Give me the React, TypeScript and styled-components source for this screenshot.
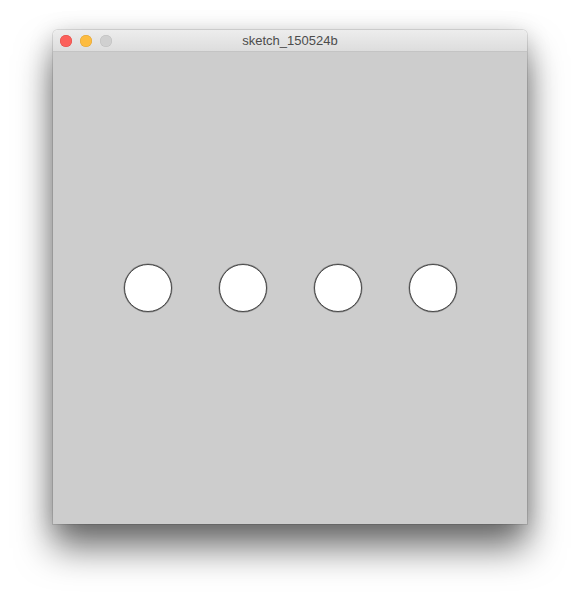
import styled, { createGlobalStyle } from "styled-components";

const GlobalStyle = createGlobalStyle`
  html, body {
    margin: 0;
    padding: 0;
    background: #ffffff;
  }
  body {
    width: 580px;
    height: 600px;
    overflow: hidden;
  }
`;

const Page = styled.div`
  padding: 30px 0 0 53px;
`;

const Window = styled.div`
  width: 474px;
  display: flex;
  flex-direction: column;
  border-radius: 5px 5px 0 0;
  box-shadow: 0 24px 36px rgba(0, 0, 0, 0.55), 0 4px 24px rgba(0, 0, 0, 0.18),
    0 0 0 1px rgba(0, 0, 0, 0.1);
  overflow: hidden;
`;

const TitleBar = styled.div`
  position: relative;
  height: 21px;
  display: flex;
  align-items: center;
  justify-content: center;
  background: linear-gradient(#ededed, #dddddd);
  border-bottom: 1px solid #c4c4c4;
`;

const Lights = styled.div`
  position: absolute;
  left: 7px;
  top: 5px;
  display: flex;
  gap: 8px;
`;

const Light = styled.span<{ $color: string; $ring: string }>`
  width: 12px;
  height: 12px;
  border-radius: 50%;
  background: ${(p) => p.$color};
  box-shadow: inset 0 0 0 0.5px ${(p) => p.$ring};
`;

const Title = styled.span`
  font-family: "Liberation Sans", Arial, sans-serif;
  font-size: 13px;
  color: #4c4c4c;
`;

const Canvas = styled.div`
  height: 472px;
  background: #cdcdcd;
  display: flex;
  align-items: center;
  justify-content: center;
  gap: 47px;
`;

const Dot = styled.div`
  width: 46px;
  height: 46px;
  border-radius: 50%;
  background: #ffffff;
  border: 1px solid #484848;
  box-shadow: 0 0 0 0.5px rgba(60, 60, 60, 0.5);
`;

export default function App() {
  const dots = [0, 1, 2, 3];
  return (
    <>
      <GlobalStyle />
      <Page>
        <Window>
          <TitleBar>
            <Lights>
              <Light $color="#fc605b" $ring="#de4a45" />
              <Light $color="#fdbc40" $ring="#dea236" />
              <Light $color="#d0d0d0" $ring="#bdbdbd" />
            </Lights>
            <Title>sketch_150524b</Title>
          </TitleBar>
          <Canvas>
            {dots.map((d) => (
              <Dot key={d} />
            ))}
          </Canvas>
        </Window>
      </Page>
    </>
  );
}
